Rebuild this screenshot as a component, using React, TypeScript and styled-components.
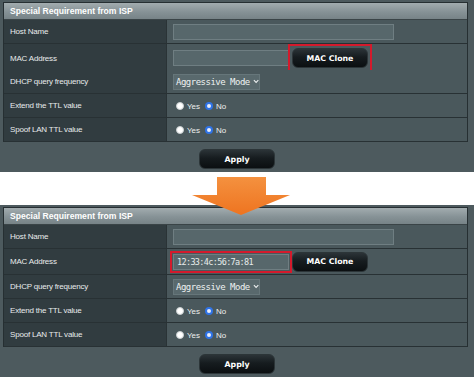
import React from "react";
import styled, { createGlobalStyle, css } from "styled-components";

const Global = createGlobalStyle`
  html, body { margin: 0; padding: 0; background: #ffffff; }
  body { width: 474px; height: 377px; overflow: hidden; font-family: "Liberation Sans", Arial, sans-serif; }
`;

const Page = styled.div`
  position: relative;
  width: 474px;
  height: 377px;
  display: flex;
  flex-direction: column;
`;

const Gap = styled.div`
  height: 34px;
  background: #ffffff;
`;

const Panel = styled.section<{ $top: number }>`
  background: #4d5a5e;
  padding: ${(p) => p.$top}px 6px 3px 3px;
  display: flex;
  flex-direction: column;
`;

const Table = styled.div`
  border: 1px solid #262f32;
  border-bottom: none;
  display: flex;
  flex-direction: column;
`;

const Header = styled.div`
  height: 17px;
  box-sizing: border-box;
  display: flex;
  align-items: center;
  padding-left: 6px;
  background: linear-gradient(180deg, #a2acaf 0%, #869296 55%, #778387 100%);
  color: #ffffff;
  font-weight: bold;
  font-size: 8.6px;
  border-bottom: 1px solid #3a4447;
`;

const Row = styled.div<{ $h: number }>`
  display: grid;
  grid-template-columns: 163px 1fr;
  height: ${(p) => p.$h}px;
  box-sizing: border-box;
  border-bottom: 1px solid #283134;
`;

const Label = styled.div`
  background: #313c40;
  color: #e8ebec;
  font-size: 8px;
  letter-spacing: -0.2px;
  display: flex;
  align-items: center;
  padding-left: 6px;
  border-right: 1px solid #2a3336;
`;

const Value = styled.div`
  background: #4a585c;
  display: flex;
  align-items: center;
  padding-left: 6px;
`;

const TextBox = styled.div<{ $w: number; $red?: boolean }>`
  width: ${(p) => p.$w}px;
  height: 16px;
  box-sizing: border-box;
  background: #57676b;
  border: 1px solid #6f7e82;
  color: #e8ecec;
  font-family: "DejaVu Sans Mono", "Liberation Mono", monospace;
  font-size: 8.5px;
  letter-spacing: -0.65px;
  white-space: nowrap;
  display: flex;
  align-items: center;
  padding-left: 3px;
  ${(p) =>
    p.$red &&
    css`
      outline: 2px solid #d41a2c;
      outline-offset: 1px;
    `}
`;

const Select = styled.div`
  width: 87px;
  height: 16px;
  box-sizing: border-box;
  background: #59696d;
  border: 1px solid #66767a;
  color: #eef1f1;
  font-family: "DejaVu Sans Mono", "Liberation Mono", monospace;
  font-size: 9px;
  letter-spacing: -0.5px;
  white-space: nowrap;
  display: flex;
  align-items: center;
  gap: 3px;
  padding-left: 2px;
`;

const DarkButton = styled.button<{ $w: number }>`
  width: ${(p) => p.$w}px;
  height: 20px;
  border-radius: 6px;
  border: 1px solid #2c3538;
  background: linear-gradient(180deg, #2b3337 0%, #161c1f 45%, #0b0f11 100%);
  color: #ffffff;
  font-family: "DejaVu Sans", Verdana, sans-serif;
  font-weight: bold;
  font-size: 7.8px;
  padding: 0;
  display: flex;
  align-items: center;
  justify-content: center;
`;

const CloneWrap = styled.div<{ $red?: boolean }>`
  display: flex;
  ${(p) =>
    p.$red
      ? css`
          margin-left: -1px;
          padding: 2px;
          border: 2px solid #d41a2c;
        `
      : css`
          margin-left: 3px;
        `}
`;

const RadioGroup = styled.div`
  display: flex;
  align-items: center;
  padding-left: 3px;
  color: #eef0f0;
  font-size: 8px;
`;

const Dot = styled.span<{ $on?: boolean }>`
  width: 8px;
  height: 8px;
  box-sizing: border-box;
  border-radius: 50%;
  display: inline-block;
  ${(p) =>
    p.$on
      ? css`
          border: 2px solid #2f73e6;
          background: #e9eefb;
        `
      : css`
          border: 1px solid #c9cfd1;
          background: #ffffff;
        `}
`;

const RadioText = styled.span`
  margin: 1px 5px 0 3px;
`;

const ApplyRow = styled.div`
  display: flex;
  justify-content: center;
  padding-top: 7px;
  padding-left: 3px;
`;

const Arrow = styled.svg`
  position: absolute;
  left: 190px;
  top: 176px;
`;

const Chevron = () => (
  <svg width="7" height="5" viewBox="0 0 7 5">
    <path d="M1 1 L3.5 3.5 L6 1" fill="none" stroke="#eef1f1" strokeWidth="1.2" />
  </svg>
);

const Radios = () => (
  <RadioGroup>
    <Dot />
    <RadioText>Yes</RadioText>
    <Dot $on />
    <RadioText>No</RadioText>
  </RadioGroup>
);

const IspPanel = ({ top, mac, redOn }: { top: number; mac: string; redOn: "button" | "input" }) => (
  <Panel $top={top}>
    <Table>
      <Header>Special Requirement from ISP</Header>
      <Row $h={24}>
        <Label>Host Name</Label>
        <Value>
          <TextBox $w={221} />
        </Value>
      </Row>
      <Row $h={26}>
        <Label>MAC Address</Label>
        <Value>
          <TextBox $w={116} $red={redOn === "input"}>
            {mac}
          </TextBox>
          <CloneWrap $red={redOn === "button"}>
            <DarkButton $w={76}>MAC Clone</DarkButton>
          </CloneWrap>
        </Value>
      </Row>
      <Row $h={24}>
        <Label>DHCP query frequency</Label>
        <Value>
          <Select>
            Aggressive Mode
            <Chevron />
          </Select>
        </Value>
      </Row>
      <Row $h={24}>
        <Label>Extend the TTL value</Label>
        <Value>
          <Radios />
        </Value>
      </Row>
      <Row $h={24}>
        <Label>Spoof LAN TTL value</Label>
        <Value>
          <Radios />
        </Value>
      </Row>
    </Table>
    <ApplyRow>
      <DarkButton $w={76}>Apply</DarkButton>
    </ApplyRow>
  </Panel>
);

export default function App() {
  return (
    <Page>
      <Global />
      <IspPanel top={2} mac="" redOn="button" />
      <Gap />
      <IspPanel top={2} mac="12:33:4c:56:7a:81" redOn="input" />
      <Arrow width="102" height="40" viewBox="0 0 102 40">
        <defs>
          <linearGradient id="og" x1="0" y1="0" x2="0" y2="1">
            <stop offset="0" stopColor="#f4913f" />
            <stop offset="1" stopColor="#ee7420" />
          </linearGradient>
        </defs>
        <path d="M27 1 H76 V19 H100 L51 39 L2 19 H27 Z" fill="url(#og)" />
      </Arrow>
    </Page>
  );
}
